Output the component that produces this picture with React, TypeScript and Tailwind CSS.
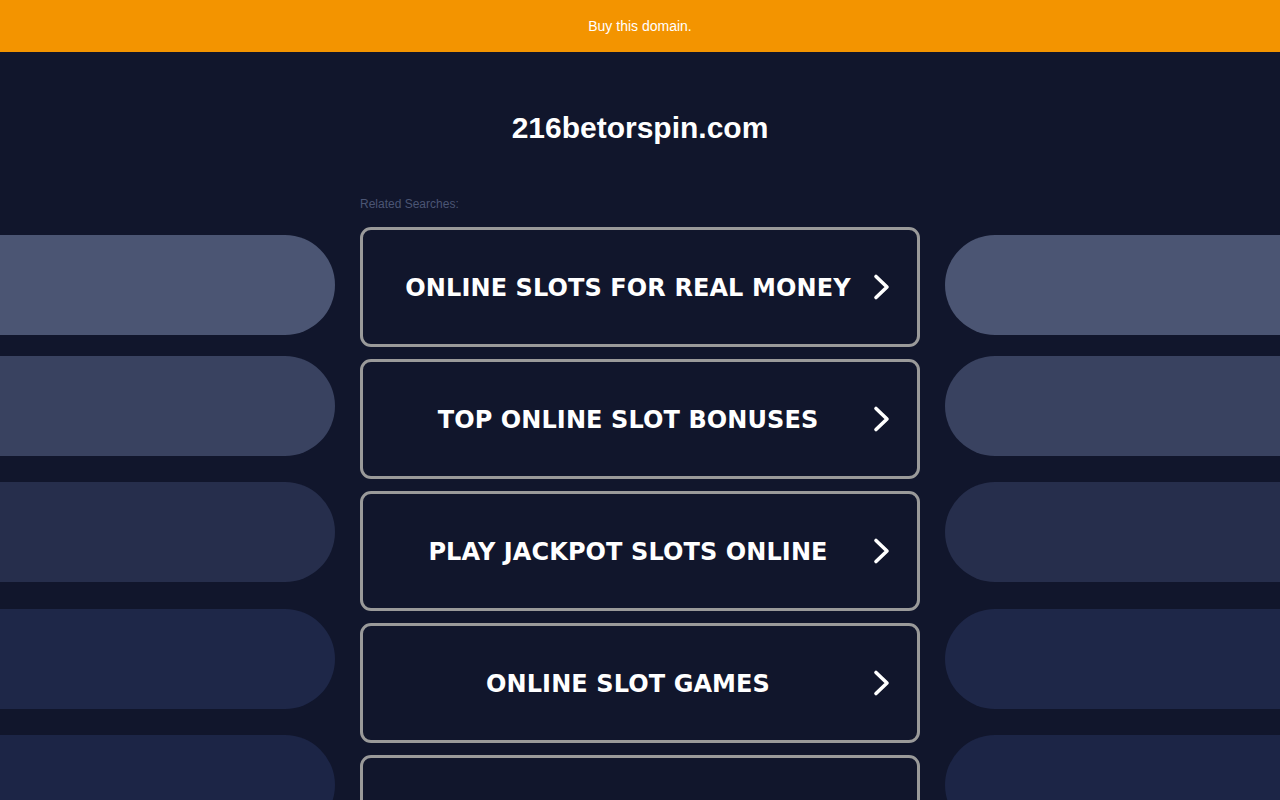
import React from 'react'

const searches = [
  'ONLINE SLOTS FOR REAL MONEY',
  'TOP ONLINE SLOT BONUSES',
  'PLAY JACKPOT SLOTS ONLINE',
  'ONLINE SLOT GAMES',
  'BEST ONLINE SLOT SITES',
]

// side decoration pills, top margin + colour
const pills = [
  { mt: 'mt-[39px]', bg: 'bg-[#4b5573]' },
  { mt: 'mt-[21px]', bg: 'bg-[#394260]' },
  { mt: 'mt-[26px]', bg: 'bg-[#262e4c]' },
  { mt: 'mt-[27px]', bg: 'bg-[#1e2748]' },
  { mt: 'mt-[26px]', bg: 'bg-[#1c2546]' },
]

function Chevron() {
  return (
    <svg
      xmlns="http://www.w3.org/2000/svg"
      className="absolute right-[27px] top-1/2 -translate-y-1/2"
      width="17"
      height="27"
      viewBox="0 0 17 27"
      fill="none"
      stroke="white"
      strokeWidth={3.6}
      strokeLinecap="round"
      strokeLinejoin="round"
    >
      <polyline points="3,3 14,13.5 3,24" />
    </svg>
  )
}

function Pills({ side }: { side: 'left' | 'right' }) {
  return (
    <div className="flex flex-col">
      {pills.map((p, i) => (
        <div
          key={i}
          className={`h-[100px] w-full shrink-0 ${p.mt} ${p.bg} ${
            side === 'left' ? 'rounded-r-[50px]' : 'rounded-l-[50px]'
          }`}
        />
      ))}
    </div>
  )
}

export default function App() {
  return (
    <div className="min-h-screen bg-[#11162c] font-['Liberation_Sans',Arial,sans-serif] overflow-hidden">
      <div className="h-[52px] bg-[#f39400] flex items-center justify-center">
        <span className="text-white text-[14px]">Buy this domain.</span>
      </div>

      <h1 className="mt-[58px] text-center text-white font-bold text-[30px] leading-[36px]">
        216betorspin.com
      </h1>

      <div className="mt-[50px] grid grid-cols-[1fr_560px_1fr] gap-x-[25px]">
        <Pills side="left" />

        <div className="flex flex-col">
          <p className="pt-[1px] text-[12px] leading-[14px] text-[#4b5574] mb-[16px]">Related Searches:</p>
          {searches.map((s) => (
            <a
              key={s}
              href="#"
              className="relative mb-[12px] h-[120px] shrink-0 flex items-center border-[3px] border-[#9a9a9a] rounded-[11px]"
            >
              <span className="flex-1 pt-[2px] pr-[24px] text-center text-white font-bold text-[24px] tracking-[0.1px] font-['DejaVu_Sans',Verdana,sans-serif]">
                {s}
              </span>
              <Chevron />
            </a>
          ))}
        </div>

        <Pills side="right" />
      </div>
    </div>
  )
}
